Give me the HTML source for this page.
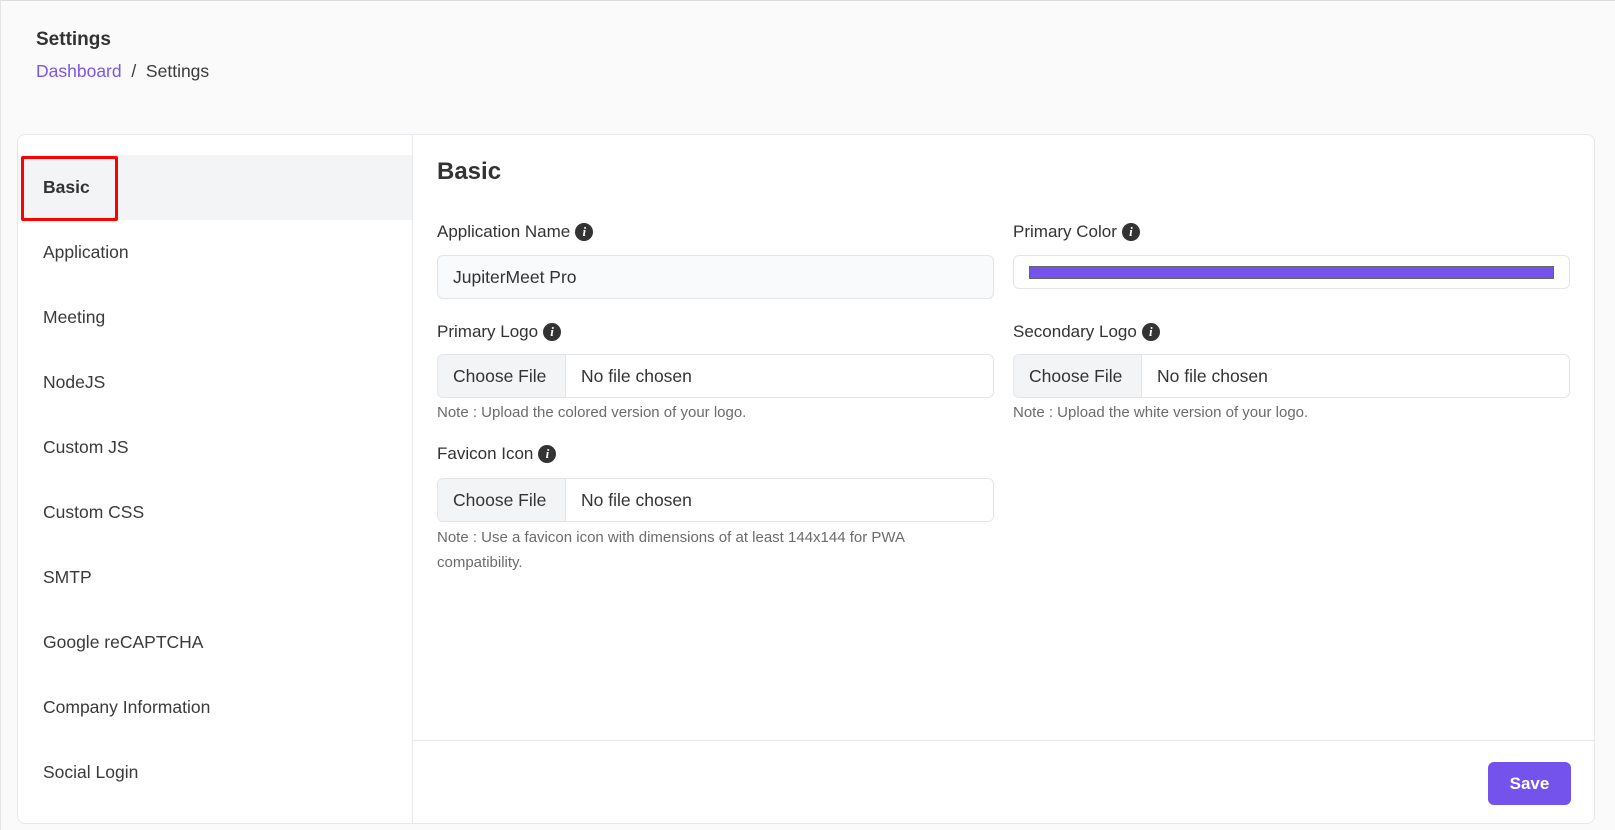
<!DOCTYPE html>
<html><head><meta charset="utf-8"><style>
*{box-sizing:border-box;margin:0;padding:0}
body{width:1615px;height:830px;background:#fafafa;font-family:"Liberation Sans",sans-serif;color:#3a3a3a;position:relative;overflow:hidden;border-top:1px solid #ddd;border-left:1px solid #e5e5e5}
.a{position:absolute}
.card{left:16px;top:133px;width:1578px;height:690px;background:#fff;border:1px solid #e6e8eb;border-radius:8px;overflow:hidden}
.side{left:0;top:0;width:395px;height:100%;border-right:1px solid #e6e8eb}
.item{position:absolute;left:0;width:394px;height:65px;line-height:65px;padding-left:25px;font-size:17.5px;color:#3a3a3a}
.lbl{font-size:17px;color:#333;font-weight:500}
.info{display:inline-block;width:18px;height:18px;border-radius:50%;background:#333;color:#fff;font-size:13px;font-weight:bold;font-style:italic;text-align:center;line-height:18px;vertical-align:1px;margin-left:5px;font-family:"Liberation Serif",serif}
.inp{border:1px solid #e3e5e8;border-radius:6px;height:44px;font-size:17.5px;color:#333;display:flex;align-items:center;overflow:hidden}
.cf{background:#f3f4f6;height:100%;width:128px;border-right:1px solid #e3e5e8;display:flex;align-items:center;padding-left:15px;flex:none}
.note{font-size:15px;color:#6b6b6b;line-height:25px}
</style></head><body>
<div class="a" style="left:35px;top:28px;font-size:19px;font-weight:bold;color:#333">Settings</div>
<div class="a" style="left:35px;top:60px;font-size:17.5px"><span style="color:#7b55ea">Dashboard</span>&nbsp; / &nbsp;Settings</div>
<div class="a card">
 <div class="a side">
  <div class="item" style="top:20px;background:#f3f4f6;font-weight:bold;color:#333">Basic</div>
  <div class="a" style="left:3px;top:21px;width:97px;height:65px;border:3px solid #f00;border-radius:2px"></div>
  <div class="item" style="top:85px">Application</div>
  <div class="item" style="top:150px">Meeting</div>
  <div class="item" style="top:215px">NodeJS</div>
  <div class="item" style="top:280px">Custom JS</div>
  <div class="item" style="top:345px">Custom CSS</div>
  <div class="item" style="top:410px">SMTP</div>
  <div class="item" style="top:475px">Google reCAPTCHA</div>
  <div class="item" style="top:540px">Company Information</div>
  <div class="item" style="top:605px">Social Login</div>
 </div>
 <div class="a" style="left:419px;top:23px;font-size:24px;font-weight:bold;color:#333">Basic</div>
 <div class="a lbl" style="left:419px;top:87px">Application Name<span class="info">i</span></div>
 <div class="a inp" style="left:419px;top:120px;width:557px;background:#f9fafb;padding-left:15px">JupiterMeet Pro</div>
 <div class="a lbl" style="left:995px;top:87px">Primary Color<span class="info">i</span></div>
 <div class="a inp" style="left:995px;top:120px;width:557px;height:34px"><div style="margin-left:15px;width:525px;height:13px;background:#7452ec;border:1px solid #666"></div></div>
 <div class="a lbl" style="left:419px;top:187px">Primary Logo<span class="info">i</span></div>
 <div class="a inp" style="left:419px;top:219px;width:557px"><div class="cf">Choose File</div><span style="padding-left:15px">No file chosen</span></div>
 <div class="a note" style="left:419px;top:265px">Note : Upload the colored version of your logo.</div>
 <div class="a lbl" style="left:995px;top:187px">Secondary Logo<span class="info">i</span></div>
 <div class="a inp" style="left:995px;top:219px;width:557px"><div class="cf">Choose File</div><span style="padding-left:15px">No file chosen</span></div>
 <div class="a note" style="left:995px;top:265px">Note : Upload the white version of your logo.</div>
 <div class="a lbl" style="left:419px;top:309px">Favicon Icon<span class="info">i</span></div>
 <div class="a inp" style="left:419px;top:343px;width:557px"><div class="cf">Choose File</div><span style="padding-left:15px">No file chosen</span></div>
 <div class="a note" style="left:419px;top:390px;width:500px">Note : Use a favicon icon with dimensions of at least 144x144 for PWA compatibility.</div>
 <div class="a" style="left:395px;top:605px;width:1200px;border-top:1px solid #e6e8eb"></div>
 <div class="a" style="left:1470px;top:627px;width:83px;height:43px;background:#7452ec;border-radius:6px;color:#fff;font-weight:bold;font-size:17px;text-align:center;line-height:43px">Save</div>
</div>
</body></html>
